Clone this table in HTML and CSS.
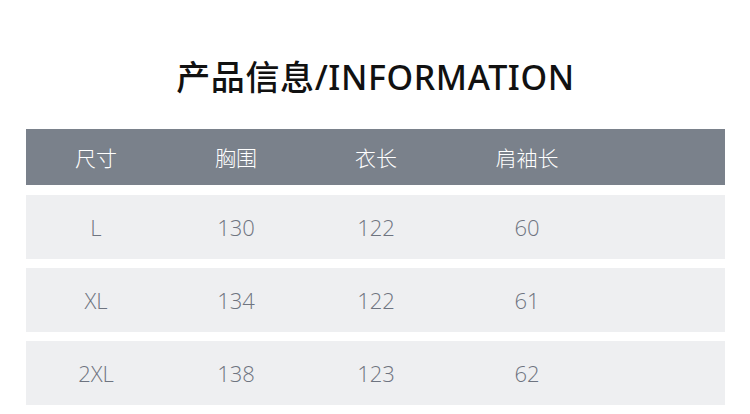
FILE: index.html
```html
<!DOCTYPE html>
<html lang="zh">
<head>
<meta charset="utf-8">
<link rel="stylesheet" href="styles.css">
</head>
<body>
<div class="page">
  <h1 class="title">产品信息/INFORMATION</h1>
  <div class="table">
    <div class="row head">
      <div class="cell">尺寸</div>
      <div class="cell">胸围</div>
      <div class="cell">衣长</div>
      <div class="cell">肩袖长</div>
      <div class="cell"></div>
    </div>
    <div class="row">
      <div class="cell">L</div>
      <div class="cell">130</div>
      <div class="cell">122</div>
      <div class="cell">60</div>
      <div class="cell"></div>
    </div>
    <div class="row">
      <div class="cell">XL</div>
      <div class="cell">134</div>
      <div class="cell">122</div>
      <div class="cell">61</div>
      <div class="cell"></div>
    </div>
    <div class="row">
      <div class="cell">2XL</div>
      <div class="cell">138</div>
      <div class="cell">123</div>
      <div class="cell">62</div>
      <div class="cell"></div>
    </div>
  </div>
</div>
</body>
</html>
```
FILE: styles.css
```css
html, body {
  margin: 0;
  padding: 0;
  background: #ffffff;
}
.page {
  width: 750px;
  height: 414px;
  box-sizing: border-box;
  padding: 56px 25px 0 26px;
  overflow: hidden;
}
.title {
  margin: 0 0 31px 0;
  text-align: center;
  font-family: "Noto Sans", "Noto Sans CJK SC", sans-serif;
  font-weight: 500;
  font-size: 34px;
  line-height: 42px;
  color: #111111;
  letter-spacing: 0.6px;
}
.table {
  display: flex;
  flex-direction: column;
  gap: 9px;
}
.row {
  display: grid;
  grid-template-columns: 140px 140px 140px 162px 1fr;
  height: 64px;
  align-items: center;
  background: #eeeff1;
  font-family: "Open Sans", "Noto Sans", sans-serif;
  font-weight: 300;
  font-size: 22px;
  color: #6e7480;
}
.row.head {
  height: 56px;
  margin-bottom: 1px;
  background: #7a818b;
  color: #ffffff;
  font-family: "Noto Sans CJK SC", sans-serif;
  font-weight: 300;
  font-size: 21px;
}
.cell {
  text-align: center;
}
```
